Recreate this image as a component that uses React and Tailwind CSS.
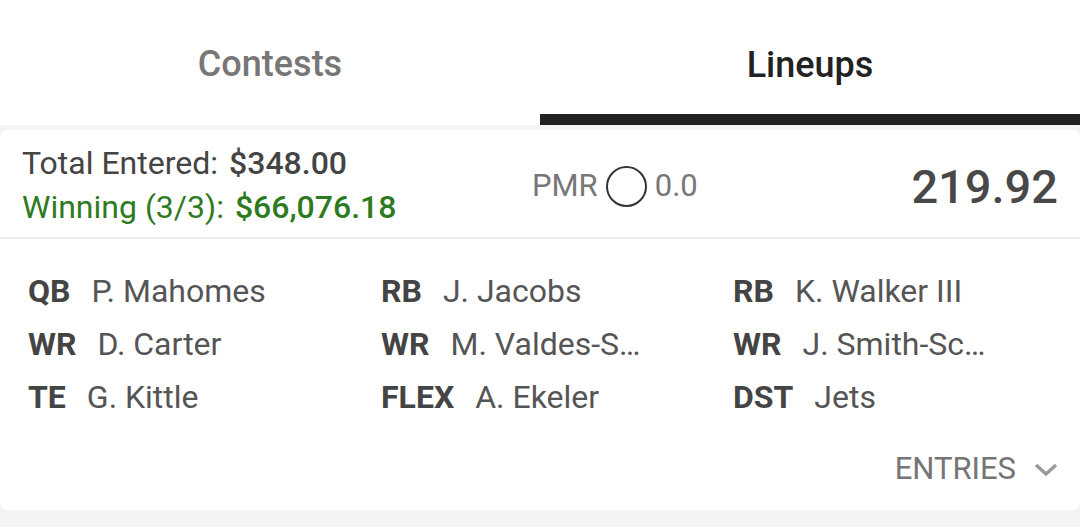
import React from "react";

const players = [
  [["QB", "P. Mahomes"], ["RB", "J. Jacobs"], ["RB", "K. Walker III"]],
  [["WR", "D. Carter"], ["WR", "M. Valdes-S…"], ["WR", "J. Smith-Sc…"]],
  [["TE", "G. Kittle"], ["FLEX", "A. Ekeler"], ["DST", "Jets"]],
];

export default function App() {
  return (
    <div
      className="w-[1080px] h-[527px] bg-[#f4f4f4] overflow-hidden"
      style={{ fontFamily: "Roboto, 'Noto Sans', sans-serif" }}
    >
      {/* Tabs */}
      <div className="h-[125px] bg-white flex">
        <div className="flex-1 flex items-center justify-center pt-[3px]">
          <span className="text-[36px] font-medium text-[#777777]">Contests</span>
        </div>
        <div className="flex-1 flex flex-col">
          <div className="flex-1 flex items-center justify-center pt-[15px]">
            <span className="text-[36px] font-medium text-[#222222]">Lineups</span>
          </div>
          <div className="h-[11px] bg-[#222222]" />
        </div>
      </div>

      {/* Card */}
      <div className="mt-[5px] bg-white rounded-[8px] h-[380px] flex flex-col">
        <div className="h-[107px] flex items-center pl-[22px] pr-[22px]">
          <div className="w-[510px] flex flex-col leading-[44px] pt-[2px]">
            <div className="text-[32px] text-[#444444]">
              Total Entered:<span className="ml-[11px] font-medium">$348.00</span>
            </div>
            <div className="text-[32px] text-[#2e7a1f]">
              Winning (3/3):<span className="ml-[11px] font-medium">$66,076.18</span>
            </div>
          </div>
          <div className="flex items-center text-[31px] text-[#777777] pt-[5px]">
            <span>PMR</span>
            <span className="ml-[8px] mr-[8px] w-[41px] h-[41px] rounded-full border-[2.5px] border-[#333333]" />
            <span>0.0</span>
          </div>
          <div className="flex-1 text-right text-[47px] font-medium text-[#484848] pt-[7px]">219.92</div>
        </div>
        <div className="h-[2px] bg-[#ececec]" />
        <div className="pl-[28px] pt-[25px] grid grid-cols-[353px_352px_1fr] auto-rows-[53px]">
          {players.flat().map(([pos, name], i) => (
            <div key={i} className="flex items-center gap-[21px] text-[32px]">
              <span className="font-bold text-[#444444]">{pos}</span>
              <span className="text-[#555555]">{name}</span>
            </div>
          ))}
        </div>
        <div className="flex-1 flex items-center justify-end pr-[22px] pt-[6px]">
          <span className="text-[31px] text-[#757575]">ENTRIES</span>
          <svg width="24" height="16" viewBox="0 0 24 16" className="ml-[18px]">
            <path d="M2 3 L12 12 L22 3" fill="none" stroke="#9a9a9a" strokeWidth="3.5" />
          </svg>
        </div>
      </div>
    </div>
  );
}
